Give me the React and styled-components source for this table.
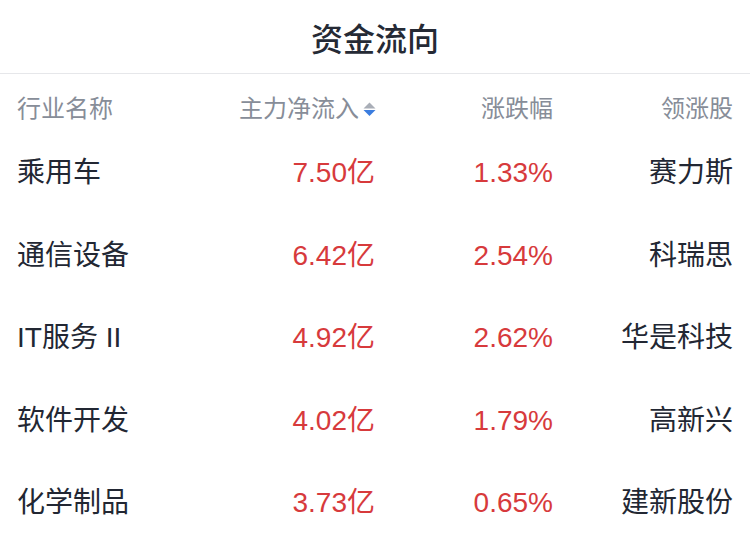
import React from "react";
import styled, { createGlobalStyle } from "styled-components";

const GlobalStyle = createGlobalStyle`
  body {
    margin: 0;
    background: #fff;
    font-family: "Liberation Sans", "Noto Sans CJK SC", sans-serif;
  }
`;

const rows = [
  { name: "乘用车", flow: "7.50亿", change: "1.33%", lead: "赛力斯" },
  { name: "通信设备", flow: "6.42亿", change: "2.54%", lead: "科瑞思" },
  { name: "IT服务 II", flow: "4.92亿", change: "2.62%", lead: "华是科技" },
  { name: "软件开发", flow: "4.02亿", change: "1.79%", lead: "高新兴" },
  { name: "化学制品", flow: "3.73亿", change: "0.65%", lead: "建新股份" },
];

export default function App() {
  return (
    <>
      <GlobalStyle />
      <Page>
        <Title>资金流向</Title>
        <Table>
          <HeadRow>
            <Cell>行业名称</Cell>
            <Cell $right>
              主力净流入
              <SortIcon width="13" height="15" viewBox="0 0 13 15">
                <path d="M6.5 0.5 L12.5 6.5 L0.5 6.5 Z" fill="#a9aeb7" />
                <path d="M6.5 14 L12.5 8 L0.5 8 Z" fill="#3b7ddf" />
              </SortIcon>
            </Cell>
            <Cell $right>涨跌幅</Cell>
            <Cell $right>领涨股</Cell>
          </HeadRow>
          {rows.map((r) => (
            <Row key={r.name}>
              <Cell>{r.name}</Cell>
              <Cell $right $red>{r.flow}</Cell>
              <Cell $right $red>{r.change}</Cell>
              <Cell $right>{r.lead}</Cell>
            </Row>
          ))}
        </Table>
      </Page>
    </>
  );
}

const Page = styled.div`
  width: 750px;
  height: 548px;
  overflow: hidden;
  background: #fff;
`;

const Title = styled.h1`
  margin: 0;
  height: 73px;
  display: flex;
  align-items: center;
  justify-content: center;
  font-size: 32px;
  font-weight: 500;
  color: #252a35;
  border-bottom: 1px solid #e6e7ea;
  font-family: "Noto Sans CJK SC", sans-serif;
`;

const Table = styled.div`
  padding: 0 17px;
`;

const Grid = styled.div`
  display: grid;
  grid-template-columns: 183px 175px 178px 180px;
  align-items: center;
`;

const HeadRow = styled(Grid)`
  height: 46px;
  padding-top: 12px;
  font-size: 24px;
  line-height: 34px;
  color: #878d98;
`;

const Row = styled(Grid)`
  height: 82.5px;
  font-size: 28px;
  line-height: 40px;
  color: #222733;
`;

const Cell = styled.div`
  display: flex;
  align-items: center;
  justify-content: ${(p) => (p.$right ? "flex-end" : "flex-start")};
  color: ${(p) => (p.$red ? "#d73a3c" : "inherit")};
  white-space: nowrap;
`;

const SortIcon = styled.svg`
  margin-left: 4px;
  margin-right: -1px;
`;
